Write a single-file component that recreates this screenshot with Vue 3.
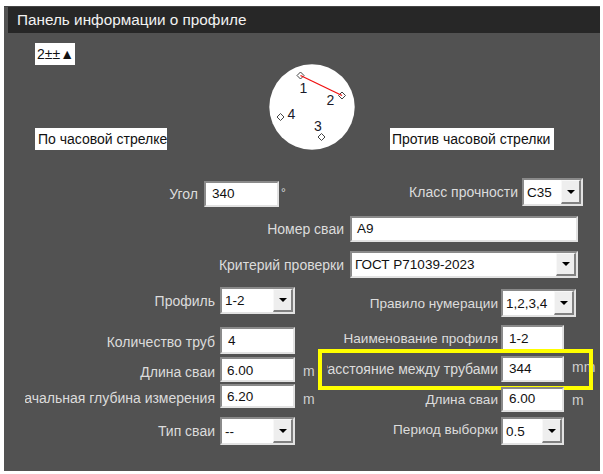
<script setup>
const marks = [
  { x: 31.5, y: 11.5, n: '1', tx: 34.5, ty: 29 },
  { x: 73, y: 31.5, n: '2', tx: 61.5, ty: 41 },
  { x: 52.5, y: 73, n: '3', tx: 49, ty: 67 },
  { x: 11.5, y: 53, n: '4', tx: 22.5, ty: 55 }
]
const diamond = (m) =>
  `${m.x},${m.y - 3.5} ${m.x + 3.5},${m.y} ${m.x},${m.y + 3.5} ${m.x - 3.5},${m.y}`
</script>

<template>
  <div class="panel">
    <div class="title">Панель информации о профиле</div>

    <div class="top">
      <div class="top-left">
        <div class="chip">2±±▲</div>
        <div class="chip wide">По часовой стрелке</div>
      </div>
      <svg class="dial" width="86" height="86" viewBox="0 0 86 86">
        <circle cx="43" cy="43" r="42.7" fill="#fff" />
        <polygon
          v-for="m in marks"
          :key="m.n"
          :points="diamond(m)"
          fill="#fff"
          stroke="#444"
          stroke-width="1"
        />
        <line x1="31.5" y1="11.5" x2="73" y2="31.5" stroke="#f01010" stroke-width="1.3" />
        <text v-for="m in marks" :key="'t' + m.n" :x="m.tx" :y="m.ty" class="dial-num">{{ m.n }}</text>
      </svg>
      <div class="chip ccw">Против часовой стрелки</div>
    </div>

    <div class="row-one">
      <div class="field angle">
        <span class="lbl">Угол</span>
        <div class="ctl w75 h26 pad-wide">340</div>
        <span class="deg">°</span>
      </div>
      <div class="field strength">
        <span class="lbl">Класс прочности</span>
        <div class="ctl sel w61 h28">С35<i class="arrow"><b></b></i></div>
      </div>
    </div>

    <div class="field full">
      <span class="lbl">Номер сваи</span>
      <div class="ctl w228 h26 pad-mid">А9</div>
    </div>
    <div class="field full next">
      <span class="lbl">Критерий проверки</span>
      <div class="ctl sel w228 h27">ГОСТ Р71039-2023<i class="arrow"><b></b></i></div>
    </div>

    <div class="columns">
      <div class="col-left">
        <div class="field">
          <span class="lbl">Профиль</span>
          <div class="ctl sel w75 h27">1-2<i class="arrow"><b></b></i></div>
        </div>
        <div class="field mt13">
          <span class="lbl lift">Количество труб</span>
          <div class="ctl w75 h27 pad-wide">4</div>
        </div>
        <div class="field mt3">
          <span class="lbl drop">Длина сваи</span>
          <div class="ctl w75 h25 pad-mid low">6.00</div>
          <span class="unit">m</span>
        </div>
        <div class="field mt2">
          <span class="lbl drop">Начальная глубина измерения</span>
          <div class="ctl w75 h24 pad-mid low">6.20</div>
          <span class="unit lower">m</span>
        </div>
        <div class="field mt9">
          <span class="lbl">Тип сваи</span>
          <div class="ctl sel w75 h28">--<i class="arrow"><b></b></i></div>
        </div>
      </div>

      <div class="col-right">
        <div class="field mt2">
          <span class="lbl">Правило нумерации</span>
          <div class="ctl sel w75 h28">1,2,3,4<i class="arrow"><b></b></i></div>
        </div>
        <div class="field mt8">
          <span class="lbl">Наименование профиля</span>
          <div class="ctl w63 h27 pad-wide">1-2</div>
        </div>
        <div class="field mt4 marked">
          <span class="lbl">Расстояние между трубами</span>
          <div class="ctl w63 h26 pad-wide">344</div>
          <span class="unit up">mm</span>
          <div class="highlight"></div>
        </div>
        <div class="field mt5">
          <span class="lbl">Длина сваи</span>
          <div class="ctl w63 h25 pad-wide">6.00</div>
          <span class="unit">m</span>
        </div>
        <div class="field mt5">
          <span class="lbl up">Период выборки</span>
          <div class="ctl sel w63 h28">0.5<i class="arrow"><b></b></i></div>
        </div>
      </div>
    </div>
  </div>
</template>

<style scoped>
.panel {
  box-sizing: border-box;
  width: 596px;
  height: 465px;
  margin: 6px 0 0 4px;
  border-top: 1px solid #454545;
  background: #525252;
  color: #dcdcdc;
  font: 14px "Liberation Sans", Arial, sans-serif;
}
.title {
  height: 26px;
  margin-left: 4px;
  padding-left: 9px;
  background: #272727;
  color: #f2f2f2;
  font-size: 15.3px;
  line-height: 26px;
}
.top {
  display: flex;
  box-sizing: border-box;
  height: 117px;
  padding: 10px 0 0 31px;
}
.top-left {
  display: flex;
  flex-direction: column;
  justify-content: space-between;
  align-items: flex-start;
  width: 234px;
}
.chip {
  box-sizing: border-box;
  height: 22px;
  padding: 0 1px 0 2px;
  background: #fff;
  color: #111;
  line-height: 23px;
  white-space: nowrap;
}
.chip.wide {
  width: 132px;
  padding-left: 3px;
}
.dial {
  flex: none;
  align-self: flex-end;
}
.dial-num {
  fill: #1a1a2a;
  font: 14px "Liberation Sans", Arial, sans-serif;
  text-anchor: middle;
}
.ccw {
  align-self: flex-end;
  width: 164px;
  margin-left: 35px;
  padding-left: 2px;
}
.row-one {
  display: flex;
  align-items: flex-start;
  margin-top: 28px;
}
.field {
  display: flex;
  align-items: center;
}
.lbl {
  display: flex;
  flex: none;
  justify-content: flex-end;
  overflow: hidden;
  white-space: nowrap;
}
.ctl {
  position: relative;
  flex: none;
  box-sizing: border-box;
  padding-left: 3px;
  border: 2px solid;
  border-color: #8a8a8a #e2e2e2 #e2e2e2 #8a8a8a;
  background: #fff;
  color: #111;
  font-size: 13.5px;
  white-space: nowrap;
}
.pad-mid {
  padding-left: 5px;
}
.pad-wide {
  padding-left: 6px;
}
.low {
  padding-top: 2px;
}
.w61 { width: 61px; }
.w63 { width: 63px; }
.w75 { width: 75px; }
.w228 { width: 228px; }
.h24 { height: 24px; line-height: 18px; }
.h25 { height: 25px; line-height: 20px; }
.h26 { height: 26px; line-height: 21px; }
.h27 { height: 27px; line-height: 24px; }
.h28 { height: 28px; line-height: 25px; }
.arrow {
  position: absolute;
  top: 0;
  right: 0;
  bottom: 0;
  display: flex;
  align-items: center;
  justify-content: center;
  box-sizing: border-box;
  width: 20px;
  border: solid;
  border-width: 1px 2px 2px 1px;
  border-color: #f8f8f8 #808080 #808080 #f8f8f8;
  background: #eeeeee;
}
.arrow b {
  width: 0;
  height: 0;
  border-top: 4px solid #000;
  border-right: 4.5px solid transparent;
  border-left: 4.5px solid transparent;
}
.angle {
  width: 290px;
  margin-top: 3px;
}
.angle .lbl {
  width: 194px;
}
.angle .ctl {
  margin-left: 6px;
}
.deg {
  align-self: flex-start;
  margin: 6px 0 0 2px;
  font-size: 12px;
  line-height: 12px;
}
.strength .lbl {
  width: 224px;
}
.strength .ctl {
  margin-left: 4px;
}
.full {
  margin-top: 9px;
}
.full .lbl {
  width: 340px;
}
.full .ctl {
  margin-left: 6px;
}
.full.next {
  margin-top: 9px;
}
.columns {
  display: flex;
  align-items: flex-start;
  margin-top: 9px;
}
.col-left {
  flex: none;
  box-sizing: border-box;
  width: 323px;
  padding-left: 21px;
}
.col-left .lbl {
  width: 190px;
  margin-right: 5px;
}
.col-right .lbl {
  width: 171px;
  margin-right: 3px;
  font-size: 13.6px;
}
.col-right .marked .lbl {
  font-size: 14px;
}
.unit {
  margin-left: 8px;
  color: #cfcfcf;
}
.col-left .unit {
  position: relative;
  top: 1px;
}
.col-left .unit.lower {
  top: 3px;
}
.lift { position: relative; top: 1px; }
.drop { position: relative; top: 2px; }
.up { position: relative; top: -2px; }
.mt2 { margin-top: 2px; }
.mt3 { margin-top: 3px; }
.mt4 { margin-top: 4px; }
.mt5 { margin-top: 5px; }
.mt8 { margin-top: 8px; }
.mt9 { margin-top: 9px; }
.mt13 { margin-top: 13px; }
.marked {
  position: relative;
}
.highlight {
  position: absolute;
  top: -7px;
  left: -9px;
  box-sizing: border-box;
  width: 275px;
  height: 41px;
  border: 4px solid #ffff00;
  pointer-events: none;
}
</style>

<style>
html,
body {
  background: #fff;
}
</style>
